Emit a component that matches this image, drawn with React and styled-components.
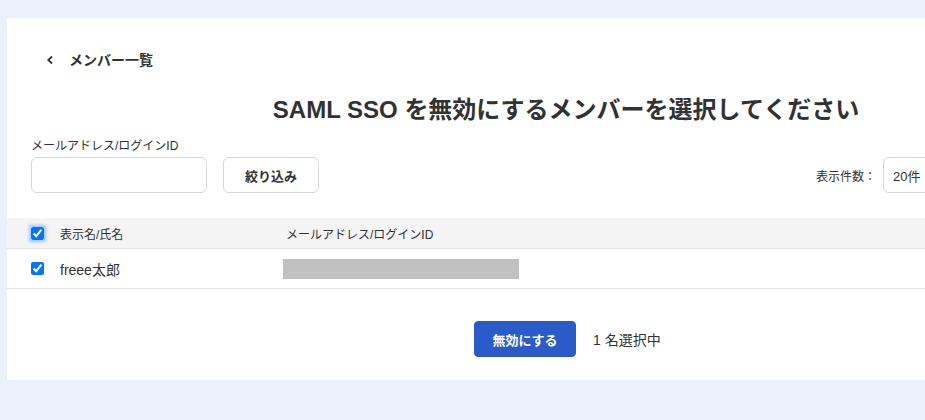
import styled, { createGlobalStyle } from "styled-components";

const GlobalStyle = createGlobalStyle`
  html, body {
    margin: 0;
    padding: 0;
    background: #ebf1fc;
    overflow: hidden;
  }
  body {
    font-family: "Liberation Sans", "Noto Sans CJK JP", sans-serif;
    color: #323232;
  }
`;

const Page = styled.div`
  padding: 18px 0 0 7px;
  height: 420px;
  box-sizing: border-box;
`;

const Card = styled.main`
  width: 1118px;
  height: 362px;
  background: #fff;
  box-sizing: border-box;
  padding-top: 32px;
`;

const BackLink = styled.a`
  display: inline-flex;
  align-items: center;
  gap: 14px;
  margin-left: 38px;
  font-size: 14px;
  font-weight: 700;
  color: #323232;
  text-decoration: none;
  line-height: 20px;
`;

const Title = styled.h1`
  margin: 25px 0 0;
  text-align: center;
  font-size: 24px;
  font-weight: 700;
  line-height: 30px;
  color: #323232;
`;

const FilterBar = styled.div`
  display: flex;
  align-items: flex-end;
  justify-content: space-between;
  padding: 0 0 0 24px;
  margin-top: 14px;
`;

const FilterLeft = styled.div`
  display: flex;
  align-items: flex-end;
  gap: 16px;
`;

const Field = styled.label`
  display: flex;
  flex-direction: column;
  gap: 4px;
  font-size: 12px;
  color: #323232;
  line-height: 14px;
`;

const TextInput = styled.input`
  width: 176px;
  height: 36px;
  box-sizing: border-box;
  border: 1px solid #d7d7d7;
  border-radius: 6px;
  font-family: inherit;
  font-size: 14px;
  padding: 0 8px;
`;

const Button = styled.button`
  height: 36px;
  box-sizing: border-box;
  padding: 0 ${(p) => (p.$primary ? "16px" : "20px")};
  min-width: ${(p) => (p.$primary ? "102px" : "96px")};
  border: 1px solid ${(p) => (p.$primary ? "#2a5bc8" : "#d7d7d7")};
  border-radius: ${(p) => (p.$primary ? "4px" : "6px")};
  background: ${(p) => (p.$primary ? "#2a5bc8" : "#fff")};
  color: ${(p) => (p.$primary ? "#fff" : "#323232")};
  font-family: inherit;
  font-size: 13px;
  font-weight: 700;
`;

const PerPage = styled.div`
  display: flex;
  align-items: center;
  gap: 7px;
  font-size: 12px;
  margin-right: 182px;
`;

const Select = styled.div`
  width: 60px;
  height: 36px;
  box-sizing: border-box;
  border: 1px solid #d7d7d7;
  border-radius: 6px;
  display: flex;
  align-items: center;
  padding-left: 9px;
  font-size: 13px;
  color: #323232;
`;

const Table = styled.div`
  margin-top: 25px;
`;

const Row = styled.div`
  display: grid;
  grid-template-columns: 53px 226px 1fr;
  align-items: center;
  height: ${(p) => (p.$head ? "30px" : "39px")};
  background: ${(p) => (p.$head ? "#f5f4f5" : "#fff")};
  border-bottom: 1px solid #e3e3e3;
  color: #323232;
  font-size: ${(p) => (p.$head ? "12px" : "14px")};
`;

const CheckCell = styled.div`
  padding-left: 24px;
  display: flex;
  align-items: center;
`;

const Check = styled.input`
  width: 13px;
  height: 13px;
  margin: 0;
  accent-color: #0075ff;
  border-radius: 2px;
  box-shadow: ${(p) => (p.$focus ? "0 0 3px 2px rgba(0,117,255,0.35)" : "none")};
`;

const Redacted = styled.div`
  width: 236px;
  height: 20px;
  background: #c1c1c1;
  margin-left: -3px;
`;

const Footer = styled.div`
  display: flex;
  align-items: center;
  gap: 17px;
  padding-left: 467px;
  margin-top: 32px;
  font-size: 14px;
  color: #323232;
`;

export default function App() {
  return (
    <Page>
      <GlobalStyle />
      <Card>
        <BackLink href="#">
          <svg width="10" height="10" viewBox="0 0 10 10">
            <path d="M7 1.5 L3.3 5 L7 8.5" fill="none" stroke="#323232" strokeWidth="1.8" />
          </svg>
          メンバー一覧
        </BackLink>
        <Title>SAML SSO を無効にするメンバーを選択してください</Title>
        <FilterBar>
          <FilterLeft>
            <Field>
              メールアドレス/ログインID
              <TextInput />
            </Field>
            <Button>絞り込み</Button>
          </FilterLeft>
          <PerPage>
            表示件数：
            <Select>20件</Select>
          </PerPage>
        </FilterBar>
        <Table>
          <Row $head>
            <CheckCell>
              <Check type="checkbox" defaultChecked $focus />
            </CheckCell>
            <div>表示名/氏名</div>
            <div>メールアドレス/ログインID</div>
          </Row>
          <Row>
            <CheckCell>
              <Check type="checkbox" defaultChecked />
            </CheckCell>
            <div>freee太郎</div>
            <Redacted />
          </Row>
        </Table>
        <Footer>
          <Button $primary>無効にする</Button>
          <span>1 名選択中</span>
        </Footer>
      </Card>
    </Page>
  );
}
